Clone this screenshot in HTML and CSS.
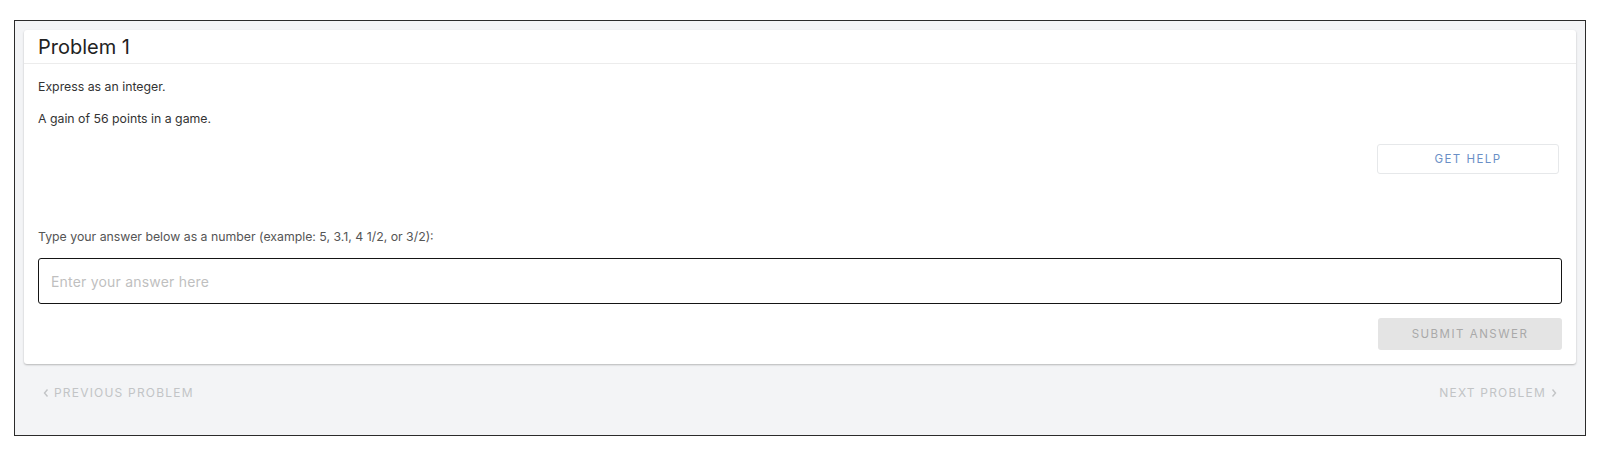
FILE: index.html
```html
<!DOCTYPE html>
<html lang="en">
<head>
<meta charset="utf-8">
<title>Problem 1</title>
<link rel="stylesheet" href="styles.css">
</head>
<body>
<div class="frame">
  <div class="card">
    <div class="card-header">Problem 1</div>
    <div class="card-body">
      <p class="text">Express as an integer.</p>
      <p class="text second">A gain of 56 points in a game.</p>
      <div class="help-row">
        <button class="btn-help" type="button">GET HELP</button>
      </div>
      <label class="label" for="answer">Type your answer below as a number (example: 5, 3.1, 4 1/2, or 3/2):</label>
      <input class="answer" id="answer" type="text" placeholder="Enter your answer here">
      <div class="submit-row">
        <button class="btn-submit" type="button" disabled>SUBMIT ANSWER</button>
      </div>
    </div>
  </div>
  <div class="nav">
    <span class="nav-link"><svg class="chev" viewBox="0 0 6 10" width="6" height="10"><path d="M4.5 1.5 L1.5 5 L4.5 8.5" fill="none" stroke="currentColor" stroke-width="1.4"/></svg>PREVIOUS PROBLEM</span>
    <span class="nav-link">NEXT PROBLEM<svg class="chev" viewBox="0 0 6 10" width="6" height="10"><path d="M1.5 1.5 L4.5 5 L1.5 8.5" fill="none" stroke="currentColor" stroke-width="1.4"/></svg></span>
  </div>
</div>
</body>
</html>
```

FILE: styles.css
```css
html, body {
  margin: 0;
  padding: 0;
  background: #ffffff;
}
body {
  font-family: Inter, "Liberation Sans", sans-serif;
  color: #333;
}
.frame {
  margin: 20px 14px 0 14px;
  height: 405px;
  border: 1px solid #2b2b2b;
  background: #f3f4f6;
  padding: 9px 9px 0 9px;
}
.card {
  background: #fff;
  border-radius: 3px;
  box-shadow: 0 1px 2px rgba(0,0,0,0.25);
}
.card-header {
  height: 33px;
  border-bottom: 1px solid #ececec;
  padding: 0 14px;
  display: flex;
  align-items: center;
  font-size: 20px;
  color: #222;
  font-weight: 400;
}
.card-body {
  padding: 15px 14px 14px 14px;
  display: flex;
  flex-direction: column;
}
.text {
  margin: 0;
  font-size: 12.3px;
  line-height: 16px;
  color: #333;
}
.text.second {
  margin-top: 16px;
}
.help-row {
  display: flex;
  justify-content: flex-end;
  margin-top: 17px;
  padding-right: 3px;
}
.btn-help {
  width: 182px;
  height: 30px;
  background: #fff;
  border: 1px solid #e6e8ea;
  border-radius: 3px;
  font-family: inherit;
  font-size: 11.5px;
  letter-spacing: 1.45px;
  color: #6a8fc6;
  padding: 0;
}
.label {
  margin-top: 55px;
  font-size: 12.3px;
  line-height: 16px;
  color: #555;
}
.answer {
  margin-top: 13px;
  height: 46px;
  box-sizing: border-box;
  border: 1.5px solid #151515;
  border-radius: 3px;
  padding: 0 12px;
  font-family: inherit;
  font-size: 14px;
  letter-spacing: 0.2px;
  color: #333;
  outline: none;
}
.answer::placeholder {
  color: #bfbfbf;
}
.submit-row {
  display: flex;
  justify-content: flex-end;
  margin-top: 14px;
}
.btn-submit {
  width: 184px;
  height: 32px;
  background: #e4e4e4;
  border: none;
  border-radius: 3px;
  font-family: inherit;
  font-size: 11.5px;
  letter-spacing: 1.5px;
  color: #a9a9a9;
  padding: 0;
}
.nav {
  display: flex;
  justify-content: space-between;
  margin-top: 22px;
  padding: 0 19px;
}
.nav-link {
  display: flex;
  align-items: center;
  gap: 5px;
  font-size: 12px;
  line-height: 14px;
  letter-spacing: 1.2px;
  color: #c2c4c6;
}
.chev {
  display: block;
}
```
